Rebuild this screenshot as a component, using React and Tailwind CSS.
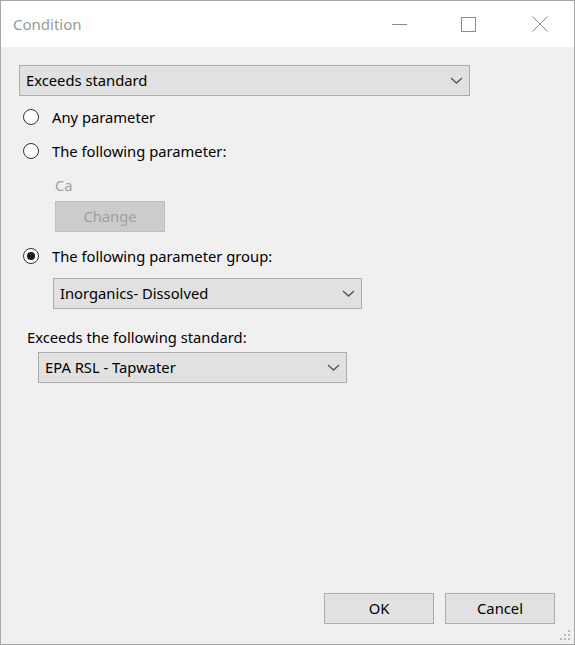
import { useState } from 'react'

const font = { fontFamily: '"Noto Sans", "Open Sans", sans-serif' }

function Chevron() {
  return (
    <svg width="13" height="7" viewBox="0 0 13 7" className="shrink-0">
      <path d="M1 1 L6.5 6 L12 1" fill="none" stroke="#555" strokeWidth="1.3" />
    </svg>
  )
}

function Combo({ value, className }) {
  return (
    <div className={`flex items-center justify-between h-[31px] border border-[#adadad] bg-[#e1e1e1] pl-[6px] pr-[6px] ${className}`}>
      <span className="text-[14.75px] text-black leading-none">{value}</span>
      <Chevron />
    </div>
  )
}

function Radio({ checked, label, onClick }) {
  return (
    <div className="flex items-center h-[24px] cursor-default" onClick={onClick}>
      <div className="ml-[22px] w-[16px] h-[16px] rounded-full border-[1.6px] border-[#333] bg-white flex items-center justify-center">
        {checked && <div className="w-[8px] h-[8px] rounded-full bg-[#1a1a1a]" />}
      </div>
      <span className="ml-[13px] text-[14.75px] text-black leading-none">{label}</span>
    </div>
  )
}

function Button({ children, disabled, className }) {
  return (
    <div
      className={`flex items-center justify-center h-[31px] w-[110px] border text-[14.75px] leading-none ${
        disabled ? 'bg-[#cccccc] border-[#bfbfbf] text-[#a0a0a0]' : 'bg-[#e1e1e1] border-[#adadad] text-black'
      } ${className}`}
    >
      {children}
    </div>
  )
}

export default function App() {
  const [mode, setMode] = useState('group')

  return (
    <div style={font} className="w-[575px] h-[645px] border border-[#a6a6a6] flex flex-col overflow-hidden select-none">
      <div className="h-[46px] bg-white flex items-center shrink-0">
        <span className="ml-[12px] text-[15px] text-[#999] leading-none">Condition</span>
        <div className="ml-auto flex items-center">
          <div className="w-[15px] h-px bg-[#8a8a8a] mr-[54px]" />
          <div className="w-[15px] h-[15px] border border-[#8a8a8a] mr-[56px]" />
          <svg width="16" height="16" viewBox="0 0 16 16" className="mr-[26px]">
            <path d="M0.5 0.5 L15.5 15.5 M15.5 0.5 L0.5 15.5" stroke="#8a8a8a" strokeWidth="1" />
          </svg>
        </div>
      </div>

      <div className="flex-1 bg-[#f0f0f0] flex flex-col relative">
        <Combo value="Exceeds standard" className="mt-[18px] ml-[18px] w-[451px]" />

        <div className="mt-[9px]">
          <Radio checked={mode === 'any'} label="Any parameter" onClick={() => setMode('any')} />
        </div>
        <div className="mt-[10px]">
          <Radio checked={mode === 'param'} label="The following parameter:" onClick={() => setMode('param')} />
        </div>

        <div className="mt-[12px] ml-[54px] h-[20px] flex items-center text-[14.75px] text-[#a0a0a0] leading-none">Ca</div>
        <Button disabled className="mt-[6px] ml-[54px]">Change</Button>

        <div className="mt-[12px]">
          <Radio checked={mode === 'group'} label="The following parameter group:" onClick={() => setMode('group')} />
        </div>

        <Combo value="Inorganics- Dissolved" className="mt-[10px] ml-[52px] w-[309px]" />

        <div className="mt-[18px] ml-[26px] h-[20px] flex items-center text-[14.75px] text-black leading-none">
          Exceeds the following standard:
        </div>
        <Combo value="EPA RSL - Tapwater" className="mt-[5px] ml-[37px] w-[309px]" />

        <div className="mt-auto mb-[20px] flex justify-end pr-[19px] gap-[11px]">
          <Button>OK</Button>
          <Button>Cancel</Button>
        </div>

        <svg width="12" height="12" viewBox="0 0 12 12" className="absolute right-[3px] bottom-[3px]">
          {[[9, 1], [5, 5], [9, 5], [1, 9], [5, 9], [9, 9]].map(([x, y]) => (
            <rect key={`${x}-${y}`} x={x} y={y} width="2" height="2" fill="#b8b8b8" />
          ))}
        </svg>
      </div>
    </div>
  )
}
